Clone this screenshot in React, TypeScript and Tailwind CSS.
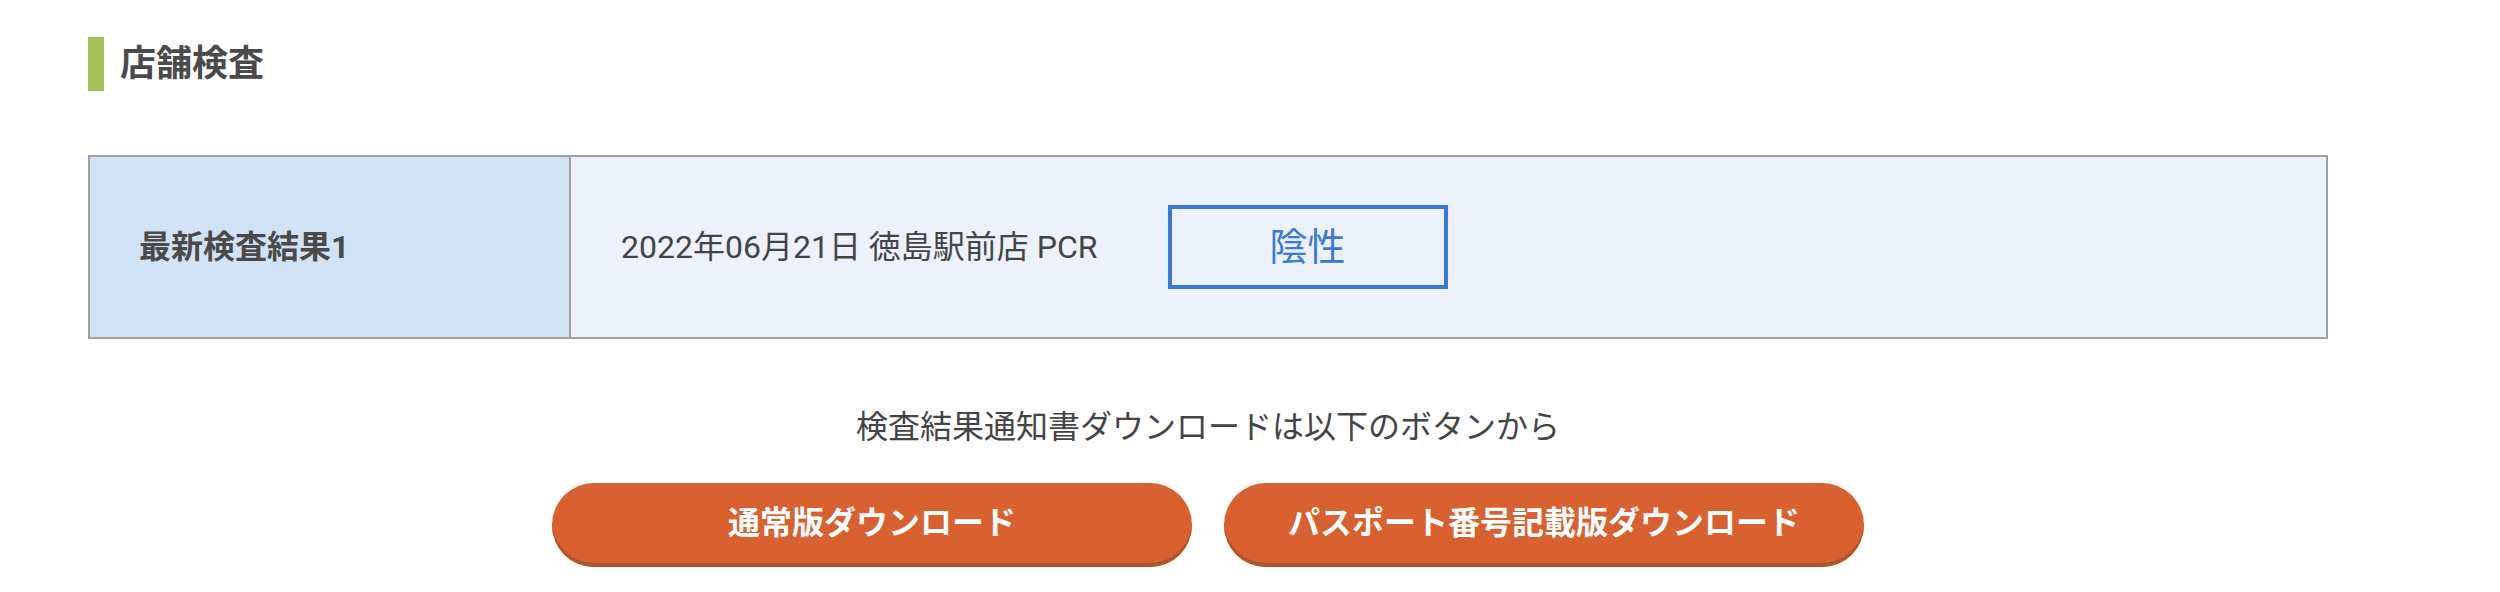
import React from "react";

export default function App() {
  const font = { fontFamily: 'Roboto, "Noto Sans CJK JP", sans-serif' };
  return (
    <div className="w-[2500px] h-[592px] bg-white text-[#4a4a4a]" style={font}>
      <div className="ml-[88px] w-[2240px] pt-[37px]">
        <div className="flex items-center gap-[16px]">
          <div className="w-[16px] h-[54px] bg-[#a6c257]" />
          <h2 className="text-[36px] font-bold leading-none">店舗検査</h2>
        </div>

        <div className="mt-[64px] flex h-[184px] border-2 border-[#a0a0a0]">
          <div className="w-[481px] shrink-0 bg-[#d1e2f4] border-r-2 border-[#a0a0a0] flex items-center pl-[49px]">
            <span className="text-[32px] font-bold">最新検査結果1</span>
          </div>
          <div className="flex-1 bg-[#ecf1fb] flex items-center pl-[50px]">
            <span className="text-[32px] text-[#444]">2022年06月21日 徳島駅前店 PCR</span>
            <div className="ml-[70px] w-[280px] h-[84px] border-4 border-[#3a7ad4] flex items-center justify-center">
              <span className="text-[38px] text-[#3a7ad4] leading-none">陰性</span>
            </div>
          </div>
        </div>

        <p className="mt-[64px] text-center text-[32px] leading-[48px] text-[#444]">
          検査結果通知書ダウンロードは以下のボタンから
        </p>

        <div className="mt-[32px] flex justify-center gap-[32px]">
          <button className="w-[640px] h-[84px] rounded-full bg-[#d9602f] shadow-[inset_0_-4px_0_#b2522b] text-white text-[32px] font-bold pb-[4px]">
            通常版ダウンロード
          </button>
          <button className="w-[640px] h-[84px] rounded-full bg-[#d9602f] shadow-[inset_0_-4px_0_#b2522b] text-white text-[32px] font-bold pb-[4px]">
            パスポート番号記載版ダウンロード
          </button>
        </div>
      </div>
    </div>
  );
}
